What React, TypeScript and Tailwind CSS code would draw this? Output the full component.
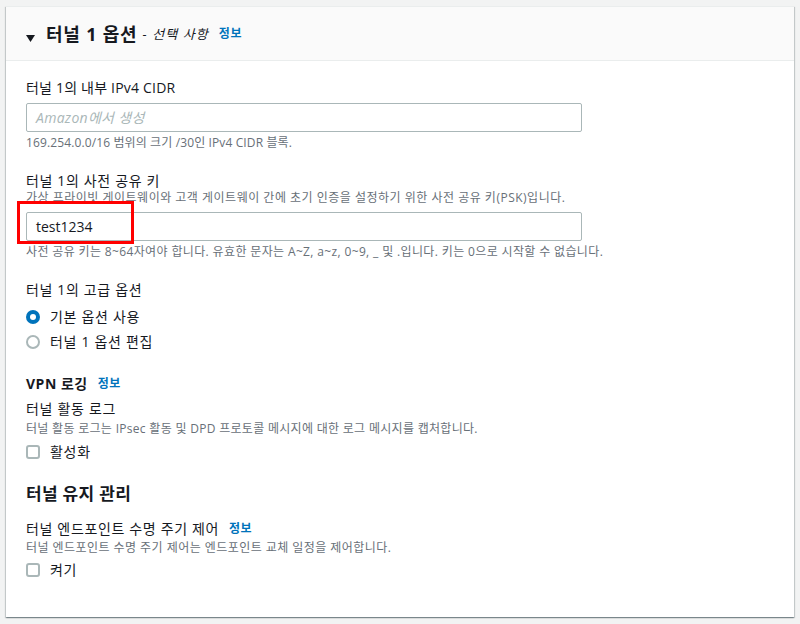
import React from 'react';

const font = { fontFamily: '"Open Sans", "Noto Sans CJK KR", sans-serif' };

const Info: React.FC<{ gap?: string }> = ({ gap = 'ml-[10px]' }) => (
  <span className={`${gap} text-[12px] font-bold tracking-[0.5px] text-[#0073bb]`}>정보</span>
);

const Radio: React.FC<{ checked?: boolean; label: string }> = ({ checked, label }) => (
  <div className="flex h-[25px] items-center">
    {checked ? (
      <span className="flex h-[14px] w-[14px] items-center justify-center rounded-full bg-[#0073bb]">
        <span className="h-[6px] w-[6px] rounded-full bg-white" />
      </span>
    ) : (
      <span className="h-[14px] w-[14px] rounded-full border-2 border-[#aab7b8] bg-white" />
    )}
    <span className="ml-[10px] text-[14px] leading-[22px] tracking-[0.7px] text-[#16191f]">{label}</span>
  </div>
);

const Checkbox: React.FC<{ label: string }> = ({ label }) => (
  <div className="flex h-[22px] items-center">
    <span className="h-[14px] w-[14px] rounded-[3px] border-2 border-[#aab7b8] bg-white" />
    <span className="ml-[10px] text-[14px] leading-[22px] tracking-[0.7px] text-[#16191f]">{label}</span>
  </div>
);

export default function App() {
  return (
    <div className="min-h-screen bg-[#f2f3f3] p-[6px]" style={font}>
      <div className="h-[611px] w-[788px] border-t border-[#eaeded] bg-white shadow-[0_1px_1px_0_rgba(0,28,36,0.3),1px_1px_1px_0_rgba(0,28,36,0.15),-1px_1px_1px_0_rgba(0,28,36,0.15)]">
        {/* Header */}
        <div className="flex h-[54px] items-center border-b border-[#eaeded] bg-[#fafafa] pl-[20px]">
          <svg width="9" height="7" viewBox="0 0 9 7" className="mt-[9px]">
            <path d="M0 0 H9 L4.5 7 Z" fill="#16191f" />
          </svg>
          <span className="ml-[11px] text-[18px] font-bold leading-[24px] tracking-[0.8px] text-[#16191f]">터널 1 옵션</span>
          <span className="ml-[5px] text-[13px] italic leading-[24px] tracking-[1.1px] text-[#16191f]">- 선택 사항</span>
          <Info gap="ml-[10px]" />
        </div>

        {/* Body */}
        <div className="pl-[20px] pt-[17px]">
          <div className="text-[14px] leading-[20px] tracking-[0.2px] text-[#16191f]">터널 1의 내부 IPv4 CIDR</div>
          <div className="mt-[5px] flex h-[29px] w-[556px] items-center rounded-[2px] border border-[#aab7b8] px-[9px] text-[14px] italic tracking-[0.3px] text-[#aab7b8]">
            Amazon에서 생성
          </div>
          <div className="mt-[3px] text-[12px] leading-[16px] tracking-[0.12px] text-[#687078]">
            169.254.0.0/16 범위의 크기 /30인 IPv4 CIDR 블록.
          </div>

          <div className="mt-[21px] text-[14px] leading-[18px] tracking-[0.65px] text-[#16191f]">터널 1의 사전 공유 키</div>
          <div className="text-[12px] leading-[16px] tracking-[0.5px] text-[#687078]">
            가상 프라이빗 게이트웨이와 고객 게이트웨이 간에 초기 인증을 설정하기 위한 사전 공유 키(PSK)입니다.
          </div>
          <div className="relative mt-[6px] w-[556px]">
            <div className="flex h-[29px] items-center rounded-[2px] border border-[#aab7b8] px-[9px] text-[14px] text-[#16191f]">
              test1234
            </div>
            <div className="absolute left-[-9px] top-[-11px] h-[43px] w-[117px] border-[3px] border-[#f00]" />
          </div>
          <div className="mt-[3px] text-[12px] leading-[16px] tracking-[0.36px] text-[#687078]">
            사전 공유 키는 8~64자여야 합니다. 유효한 문자는 A~Z, a~z, 0~9, _ 및 .입니다. 키는 0으로 시작할 수 없습니다.
          </div>

          <div className="mt-[20px] text-[14px] leading-[20px] tracking-[0.65px] text-[#16191f]">터널 1의 고급 옵션</div>
          <div className="mt-[4px]">
            <Radio checked label="기본 옵션 사용" />
            <Radio label="터널 1 옵션 편집" />
          </div>

          <div className="mt-[20px] flex items-center text-[14px] font-bold leading-[20px] tracking-[0.5px] text-[#16191f]">
            VPN 로깅
            <Info />
          </div>
          <div className="mt-[5px] text-[14px] leading-[20px] tracking-[0.7px] text-[#16191f]">터널 활동 로그</div>
          <div className="mt-[2px] text-[12px] leading-[16px] tracking-[0.3px] text-[#687078]">
            터널 활동 로그는 IPsec 활동 및 DPD 프로토콜 메시지에 대한 로그 메시지를 캡처합니다.
          </div>
          <div className="mt-[4px]">
            <Checkbox label="활성화" />
          </div>

          <div className="mt-[19px] text-[17px] font-bold leading-[24px] tracking-[0.3px] text-[#16191f]">터널 유지 관리</div>
          <div className="mt-[13px] flex items-center text-[14px] leading-[20px] tracking-[0.65px] text-[#16191f]">
            터널 엔드포인트 수명 주기 제어
            <Info />
          </div>
          <div className="mt-[1px] text-[12px] leading-[16px] tracking-[0.45px] text-[#687078]">
            터널 엔드포인트 수명 주기 제어는 엔드포인트 교체 일정을 제어합니다.
          </div>
          <div className="mt-[3px]">
            <Checkbox label="켜기" />
          </div>
        </div>
      </div>
    </div>
  );
}
